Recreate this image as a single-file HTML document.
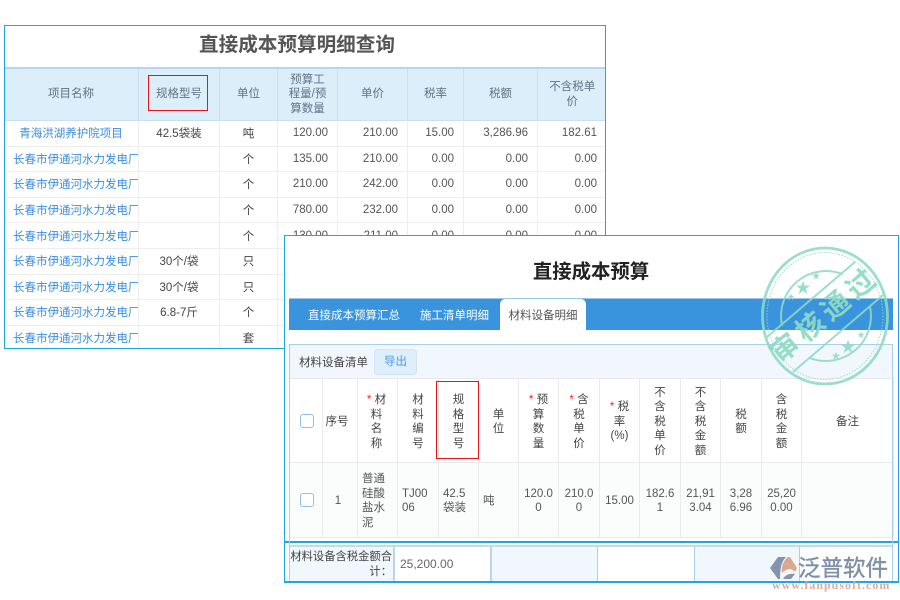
<!DOCTYPE html>
<html lang="zh-CN">
<head>
<meta charset="utf-8">
<title>直接成本预算</title>
<style>
html,body{margin:0;padding:0;background:#fff;}
body{width:900px;height:600px;position:relative;overflow:hidden;font-family:"Liberation Sans","Noto Sans CJK SC",sans-serif;font-size:11.5px;color:#444;}
.a{position:absolute;box-sizing:border-box;}
table{border-collapse:collapse;table-layout:fixed;position:absolute;}
td{padding:0;overflow:hidden;white-space:nowrap;}
#lp{left:4px;top:25px;width:602px;height:324px;border:1px solid #1ea6e2;background:#fff;overflow:hidden;}
#lp .t{left:0;top:0;width:584px;height:41px;line-height:38px;text-align:center;font-size:19.6px;font-weight:bold;color:#555;}
#lt{left:-1px;top:41px;width:601px;}
#lt th{padding:0;background:#ddeefb;color:#5f7185;font-weight:normal;border-left:1px solid #c9e0f3;border-top:2px solid #b5d6f0;border-bottom:1px solid #c9e0f3;height:51px;line-height:14.5px;text-align:center;}
#lt td{height:24.6px;border:1px solid #eeeeee;text-align:right;padding-right:9px;color:#555;}
#lt td.n{text-align:left;padding:0;padding-left:7px;color:#3a8ee0;}
#lt td.c{text-align:center;padding:0;color:#444;}
#rp{left:284px;top:235px;width:615px;height:348px;border:1px solid #1ea6e2;background:#fff;}
#rt{left:289px;top:378px;width:604px;}
#rt td{border:1px solid #eaeaea;text-align:center;line-height:14.5px;color:#444;}
#rt tr.h td{height:80px;padding-top:3px;background:#fff;}
#rt tr.d td{height:72px;padding-top:2px;background:#fbfdfc;color:#555;}
#rt td.l{text-align:left;padding-left:4px;}
b.s{color:#f22;font-weight:normal;}
.f{top:545px;height:37px;border-top:2px solid #c3daf0;}
.cb{width:14px;height:14px;border:1px solid #8fc0ea;border-radius:3px;background:#fff;}
</style>
</head>
<body>
<div class="a" id="lp">
<div class="a t">直接成本预算明细查询</div>
<table id="lt" style="left:0">
<colgroup><col style="width:133px"><col style="width:81px"><col style="width:58px"><col style="width:60px"><col style="width:70px"><col style="width:56px"><col style="width:74px"><col style="width:69px"></colgroup>
<tr><th style="padding-right:2px">项目名称</th><th>规格型号</th><th>单位</th><th>预算工<br>程量/预<br>算数量</th><th>单价</th><th>税率</th><th>税额</th><th>不含税单<br>价</th></tr>
<tr><td class="c" style="color:#3a8ee0;padding-right:2px">青海洪湖养护院项目</td><td class="c">42.5袋装</td><td class="c">吨</td><td>120.00</td><td>210.00</td><td>15.00</td><td>3,286.96</td><td>182.61</td></tr>
<tr><td class="n">长春市伊通河水力发电厂</td><td class="c"></td><td class="c">个</td><td>135.00</td><td>210.00</td><td>0.00</td><td>0.00</td><td>0.00</td></tr>
<tr><td class="n">长春市伊通河水力发电厂</td><td class="c"></td><td class="c">个</td><td>210.00</td><td>242.00</td><td>0.00</td><td>0.00</td><td>0.00</td></tr>
<tr><td class="n">长春市伊通河水力发电厂</td><td class="c"></td><td class="c">个</td><td>780.00</td><td>232.00</td><td>0.00</td><td>0.00</td><td>0.00</td></tr>
<tr><td class="n">长春市伊通河水力发电厂</td><td class="c"></td><td class="c">个</td><td>130.00</td><td>211.00</td><td>0.00</td><td>0.00</td><td>0.00</td></tr>
<tr><td class="n">长春市伊通河水力发电厂</td><td class="c">30个/袋</td><td class="c">只</td><td></td><td></td><td></td><td></td><td></td></tr>
<tr><td class="n">长春市伊通河水力发电厂</td><td class="c">30个/袋</td><td class="c">只</td><td></td><td></td><td></td><td></td><td></td></tr>
<tr><td class="n">长春市伊通河水力发电厂</td><td class="c">6.8-7斤</td><td class="c">个</td><td></td><td></td><td></td><td></td><td></td></tr>
<tr><td class="n">长春市伊通河水力发电厂</td><td class="c"></td><td class="c">套</td><td></td><td></td><td></td><td></td><td></td></tr>
</table>
</div>
<div class="a" style="left:148px;top:75px;width:60px;height:36px;border:1px solid #e8141c;"></div>

<div class="a" id="rp"></div>
<div class="a" style="left:285px;top:258px;width:612px;height:28px;line-height:28px;text-align:center;font-size:19.4px;font-weight:bold;color:#222;">直接成本预算</div>

<div class="a" style="left:289px;top:298px;width:604px;height:32px;background:#3a94dd;border-top:1px solid #9cc8ec;"></div>
<div class="a" style="left:308px;top:307px;height:18px;line-height:18px;color:#fff;">直接成本预算汇总</div>
<div class="a" style="left:420px;top:307px;height:18px;line-height:18px;color:#fff;">施工清单明细</div>
<div class="a" style="left:500px;top:299px;width:86px;height:31px;background:#fff;border-radius:5px 5px 0 0;line-height:35px;text-align:center;color:#555;">材料设备明细</div>

<div class="a" style="left:289px;top:344px;width:604px;height:198px;background:#f2f6fe;border:1px solid #a9cfee;border-bottom:0;"></div>
<div class="a" style="left:299px;top:354px;height:18px;line-height:18px;color:#444;">材料设备清单</div>
<div class="a" style="left:374px;top:349px;width:43px;height:26px;background:#dfeefb;border:1px solid #cfe3f5;border-radius:4px;line-height:24px;text-align:center;color:#4a9ae8;">导出</div>

<div class="a" style="left:290px;top:537px;width:602px;height:4px;background:#fff;"></div>
<table id="rt">
<colgroup><col style="width:33px"><col style="width:35px"><col style="width:40px"><col style="width:41px"><col style="width:40px"><col style="width:40px"><col style="width:40px"><col style="width:41px"><col style="width:40px"><col style="width:41px"><col style="width:40px"><col style="width:41px"><col style="width:40px"><col style="width:92px"></colgroup>
<tr class="h">
<td></td>
<td style="padding-right:6px">序号</td>
<td style="padding-right:2px"><b class="s">*</b> 材<br>料<br>名<br>称</td>
<td>材<br>料<br>编<br>号</td>
<td>规<br>格<br>型<br>号</td>
<td>单<br>位</td>
<td><b class="s">*</b> 预<br>算<br>数<br>量</td>
<td><b class="s">*</b> 含<br>税<br>单<br>价</td>
<td><b class="s">*</b> 税<br>率<br>(%)</td>
<td>不<br>含<br>税<br>单<br>价</td>
<td>不<br>含<br>税<br>金<br>额</td>
<td>税<br>额</td>
<td>含<br>税<br>金<br>额</td>
<td>备注</td>
</tr>
<tr class="d">
<td></td>
<td style="padding-right:4px">1</td>
<td class="l">普通<br>硅酸<br>盐水<br>泥</td>
<td class="l">TJ00<br>06</td>
<td class="l">42.5<br>袋装</td>
<td class="l">吨</td>
<td>120.0<br>0</td>
<td>210.0<br>0</td>
<td>15.00</td>
<td>182.6<br>1</td>
<td>21,91<br>3.04</td>
<td>3,28<br>6.96</td>
<td>25,20<br>0.00</td>
<td></td>
</tr>
</table>
<div class="a cb" style="left:300px;top:414px;"></div>
<div class="a cb" style="left:300px;top:493px;"></div>
<div class="a" style="left:436px;top:381px;width:43px;height:78px;border:1px solid #e8141c;"></div>

<div class="a" style="left:284px;top:541px;width:615px;height:2px;background:#1ea6e2;"></div>
<div class="a" style="left:289px;top:378px;width:1px;height:204px;background:#a9cfee;"></div>
<div class="a" style="left:892px;top:378px;width:1px;height:204px;background:#a9cfee;"></div>

<div class="a f" style="left:290px;width:105px;background:#f0f7fd;border-right:2px solid #b9d6ee;text-align:right;line-height:15px;padding-top:3px;padding-right:1px;font-size:11.3px;color:#444;white-space:nowrap;">材料设备含税金额合<br>计：</div>
<div class="a f" style="left:395px;width:97px;background:#fff;border-right:2px solid #b9d6ee;line-height:35px;padding-left:5px;font-size:12px;color:#666;">25,200.00</div>
<div class="a f" style="left:492px;width:106px;background:#f0f7fd;border-right:1px solid #a9cfee;"></div>
<div class="a f" style="left:598px;width:97px;background:#fff;border-right:1px solid #a9cfee;"></div>
<div class="a f" style="left:695px;width:105px;background:#f0f7fd;border-right:1px solid #a9cfee;"></div>
<div class="a f" style="left:800px;width:92px;background:#fff;"></div>
<div class="a" style="left:284px;top:581px;width:615px;height:2px;background:#1ea6e2;"></div>

<svg class="a" style="left:0;top:0;" width="900" height="600" viewBox="0 0 900 600">
<g fill="none" stroke="#8fdac3" opacity=".88">
<ellipse cx="825" cy="316" rx="62.5" ry="68" stroke-width="2.8"/>
<ellipse cx="825" cy="316" rx="58" ry="63.5" stroke-width="1" stroke-dasharray="1.5 1.5"/>
<path stroke-width="2" d="M782.1 325.8A45 45 0 0 1 842.7 274.2"/>
<path stroke-width="2" d="M869.9 306.2A45 45 0 0 1 809.3 357.8"/>
<path stroke-width="2" d="M767 337L855 262M793 372L883 295"/>
<g fill="#8fdac3" stroke="none">
<polygon transform="translate(803 288) scale(.75)" points="0,-10 2.2,-3.1 9.5,-3.1 3.6,1.2 5.9,8.1 0,3.8 -5.9,8.1 -3.6,1.2 -9.5,-3.1 -2.2,-3.1"/>
<polygon transform="translate(816 276) scale(.45)" points="0,-10 2.2,-3.1 9.5,-3.1 3.6,1.2 5.9,8.1 0,3.8 -5.9,8.1 -3.6,1.2 -9.5,-3.1 -2.2,-3.1"/>
<polygon transform="translate(791 297) scale(.4)" points="0,-10 2.2,-3.1 9.5,-3.1 3.6,1.2 5.9,8.1 0,3.8 -5.9,8.1 -3.6,1.2 -9.5,-3.1 -2.2,-3.1"/>
<polygon transform="translate(848 347) scale(.75)" points="0,-10 2.2,-3.1 9.5,-3.1 3.6,1.2 5.9,8.1 0,3.8 -5.9,8.1 -3.6,1.2 -9.5,-3.1 -2.2,-3.1"/>
<polygon transform="translate(836 356) scale(.45)" points="0,-10 2.2,-3.1 9.5,-3.1 3.6,1.2 5.9,8.1 0,3.8 -5.9,8.1 -3.6,1.2 -9.5,-3.1 -2.2,-3.1"/>
<polygon transform="translate(861 335) scale(.4)" points="0,-10 2.2,-3.1 9.5,-3.1 3.6,1.2 5.9,8.1 0,3.8 -5.9,8.1 -3.6,1.2 -9.5,-3.1 -2.2,-3.1"/>
</g>
</g>
<text transform="translate(831 322) rotate(-40)" text-anchor="middle" font-size="28" font-weight="bold" letter-spacing="5" fill="#8fdac3" opacity=".92" font-family="'Noto Sans CJK SC',sans-serif">审核通过</text>

<path d="M778 557H786C782 561 780 567 780 579H778L770 568Z" fill="#8494ae"/>
<path d="M788 557H790L797 568L795 572C792 568 787 568 782 573C781 566 784 560 788 557Z" fill="#dca78f"/>
<path d="M783 579C785 575 790 573 795 574L791 579Z" fill="#8494ae"/>
<text x="798" y="576" font-size="22.5" stroke="#7e8fa8" stroke-width=".4" fill="#7e8fa8" font-family="'Noto Sans CJK SC',sans-serif">泛普软件</text>
<text x="772" y="589" font-size="12" font-weight="bold" letter-spacing="1" fill="#e3aa94" font-family="'Liberation Serif',serif">www.fanpusoft.com</text>
</svg>
</body>
</html>
